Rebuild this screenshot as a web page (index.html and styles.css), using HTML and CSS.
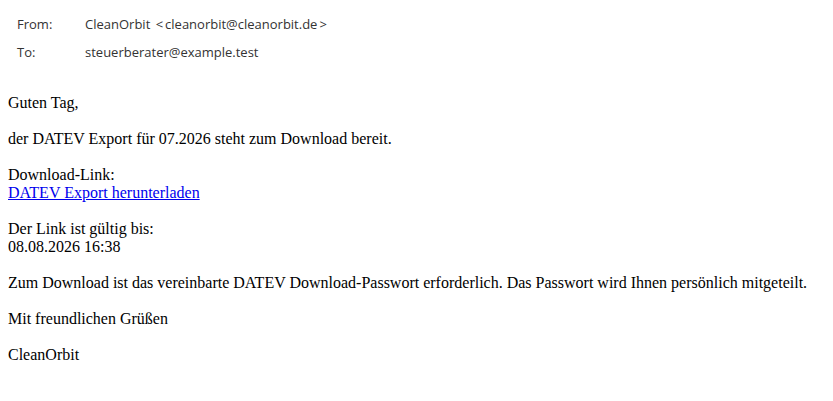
FILE: index.html
```html
<!DOCTYPE html>
<html lang="de">
<head>
<meta charset="utf-8">
<link rel="stylesheet" href="styles.css">
</head>
<body>
<div class="header">
  <div class="row"><span class="label">From:</span><span class="value">CleanOrbit <span class="angle">&lt;</span>cleanorbit@cleanorbit.de<span class="angle">&gt;</span></span></div>
  <div class="row"><span class="label">To:</span><span class="value">steuerberater@example.test</span></div>
</div>
<div class="mail">
  <p>Guten Tag,</p>
  <p>der DATEV Export für 07.2026 steht zum Download bereit.</p>
  <p>Download-Link:<br><a href="#">DATEV Export herunterladen</a></p>
  <p>Der Link ist gültig bis:<br>08.08.2026 16:38</p>
  <p>Zum Download ist das vereinbarte DATEV Download-Passwort erforderlich. Das Passwort wird Ihnen persönlich mitgeteilt.</p>
  <p>Mit freundlichen Grüßen</p>
  <p>CleanOrbit</p>
</div>
</body>
</html>
```
FILE: styles.css
```css
body {
  margin: 8px;
  background: #fff;
  font-family: "Liberation Serif", "Times New Roman", serif;
  font-size: 16px;
}
.header {
  padding: 2px 0 0 9px;
  font-family: "Open Sans", "Noto Sans", sans-serif;
  font-size: 13px;
  color: #333;
  margin-bottom: 28px;
}
.row {
  display: flex;
  height: 28px;
  align-items: center;
}
.label {
  width: 68px;
}
.angle {
  padding: 0 2px;
}
.mail p {
  margin: 0 0 18px;
  line-height: 18px;
  color: #000;
}
.mail a {
  color: #0000ee;
}
```
